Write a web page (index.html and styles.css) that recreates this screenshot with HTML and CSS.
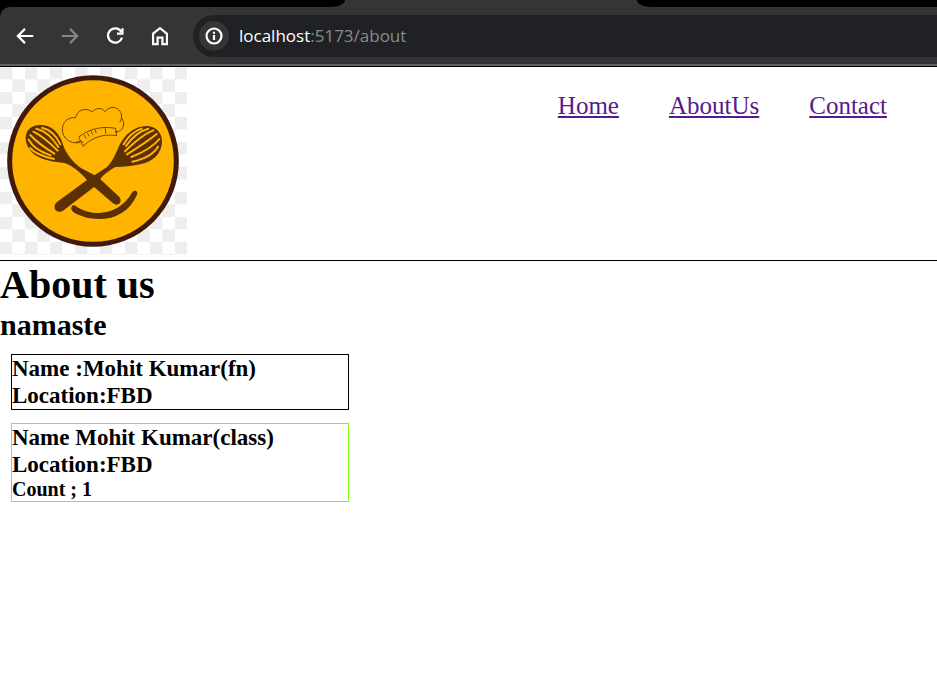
FILE: index.html
```html
<!DOCTYPE html>
<html lang="en">
<head>
<meta charset="utf-8">
<meta name="viewport" content="width=device-width, initial-scale=1">
<title>About us</title>
<link rel="stylesheet" href="styles.css">
</head>
<body>
<div class="browser">
  <div class="tabs">
    <div class="tab-before"></div>
    <div class="tab-active"></div>
    <div class="tab-after"></div>
  </div>
  <div class="toolbar">
    <div class="tools">
      <button class="tool" type="button" aria-label="Back">
        <svg viewBox="0 0 20 20"><path d="M17.5 10H4M10 3.5 3.5 10l6.500 6.500"/></svg>
      </button>
      <button class="tool tool-off" type="button" aria-label="Forward">
        <svg viewBox="0 0 20 20"><path d="M2.500 10H16M10 3.500 16.500 10 10 16.500"/></svg>
      </button>
      <button class="tool" type="button" aria-label="Reload">
        <svg viewBox="0 0 20 20"><path d="M15.800 6.200A6.500 6.500 0 1 0 16.400 11.500M16.800 3V7.800h-5"/></svg>
      </button>
      <button class="tool" type="button" aria-label="Home page">
        <svg viewBox="0 0 20 20"><path d="M3.700 7.900 10 2.900l6.300 5v9.500h-4.100v-6H7.800v6H3.700z"/></svg>
      </button>
    </div>
    <div class="address">
      <button class="site-info" type="button" aria-label="Site information">
        <svg viewBox="0 0 20 20"><circle cx="10" cy="10" r="6.800"/><path d="M10 9.200V13.600M10 6.200v1.800"/></svg>
      </button>
      <span class="url"><span class="host">localhost</span>:5173/about</span>
    </div>
  </div>
</div>

<header class="header">
  <svg class="logo" viewBox="0 3 561 564" role="img" aria-label="Whisks and chef hat logo">
    <defs>
      <pattern id="checks" y="3" width="75" height="75" patternUnits="userSpaceOnUse">
        <path fill="#fff" d="M0 0h75v75H0z"/>
        <path fill="#eee" d="M0 0h37v37H0zM37 37h38v38H37z"/>
      </pattern>
    </defs>
    <rect y="3" width="561" height="564" fill="url(#checks)"/>
    <circle cx="279" cy="285" r="250" fill="#ffb400" stroke="#421a0b" stroke-width="15"/>
    <g fill="none" stroke="#5b3005" stroke-width="2.500" stroke-linecap="round" stroke-linejoin="round">
      <path d="M238 230C210 235 188 216 187 192C187 168 203 153 227 155C230 132 258 122 277 138C288 124 306 124 315 137C328 119 352 120 362 139C367 149 365 160 360 168M366 157C378 176 368 195 350 198"/>
      <path d="M239 211C270 187 308 180 347 187L350 209C312 203 279 212 249 241L238 218C237 215 237 213 239 211zM243 224L249 230M253 208l5 9M263 202l4 8M274 196l4 9M286 192l2 8M316 188l1 14M227 229l13-3M351 197l-5 1"/>
    </g>
    <g fill="#5b3005">
      <path d="M120 177C164 177 183 211 193 247C204 270 225 295 244 307L294 333L355 390C372 404 355 425 339 412L269 352C248 325 224 302 194 291C145 286 103 277 86 246C66 209 82 178 120 177z"/>
      <path d="M440 180C402 180 373 207 357 240C346 268 335 290 320 304L258 344L171 408C154 423 169 446 189 434L289 358C302 333 317 319 346 303C396 301 444 297 469 270C501 233 486 181 440 180z"/>
      <path d="M215 422C219 413 228 419 234 425C291 456 362 442 397 379C403 369 416 375 411 386C386 444 331 467 270 457C242 450 206 438 215 422z"/>
    </g>
    <g fill="none" stroke="#ffb400" stroke-width="6" stroke-linecap="round">
      <path d="M126 185Q162 193 181 235M109 188Q146 196 175 243M100 197Q130 211 173 254M91 207Q112 231 163 263M86 221Q102 251 152 268M90 246Q110 268 162 279"/>
      <path d="M425 188Q391 199 371 235M445 188Q408 197 378 240M460 193Q427 205 375 256M470 204Q443 226 381 265M478 219Q456 248 394 273M474 242Q455 274 397 287"/>
    </g>
  </svg>
  <nav class="nav" aria-label="Main">
    <a href="#home">Home</a>
    <a href="#about">AboutUs</a>
    <a href="#contact">Contact</a>
  </nav>
</header>

<main>
  <h1>About us</h1>
  <h2>namaste</h2>
  <section class="user">
    <h3>Name :Mohit Kumar(fn)</h3>
    <h3>Location:FBD</h3>
  </section>
  <section class="user user-class">
    <h3>Name Mohit Kumar(class)</h3>
    <h3>Location:FBD</h3>
    <h4>Count ; 1</h4>
  </section>
</main>
</body>
</html>
```
FILE: styles.css
```css
* {
  box-sizing: border-box;
  margin: 0;
  padding: 0;
}

body {
  background: #fff;
  color: #000;
  font-family: "Liberation Serif", "Times New Roman", serif;
}

.browser {
  background: #000;
  border-bottom: 2px solid #606060;
}

.tabs {
  display: flex;
  height: 7px;
  background: #353535;
}

.tab-before,
.tab-after {
  background: #000;
}

.tab-before {
  width: 345px;
  border-bottom-right-radius: 14px 7px;
}

.tab-active {
  width: 292px;
}

.tab-after {
  flex: 1;
  border-bottom-left-radius: 14px 7px;
}

.toolbar {
  display: flex;
  align-items: center;
  padding: 8px 0 7px 14px;
  background: #353535;
  border-top-left-radius: 10px;
}

.tools {
  display: flex;
  gap: 23px;
  margin-right: 22px;
}

button {
  border: 0;
  background: none;
  color: #fff;
}

button svg {
  display: block;
  width: 22px;
  height: 22px;
  fill: none;
  stroke: currentColor;
  stroke-width: 2;
}

.tool-off {
  color: #868686;
}

.address {
  flex: 1;
  display: flex;
  align-items: center;
  gap: 10px;
  height: 42px;
  padding-left: 6px;
  background: #202124;
  border-radius: 21px 0 0 21px;
}

.site-info {
  padding: 4px;
  border-radius: 50%;
  background: #353535;
}

.url {
  color: #8b8c8e;
  font-family: "Open Sans", "Noto Sans", sans-serif;
  font-size: 17px;
  line-height: 24px;
}

.host {
  color: #fff;
}

.header {
  display: flex;
  justify-content: space-between;
  align-items: flex-start;
  padding-bottom: 5px;
  border-top: 1px solid #000;
  border-bottom: 1px solid #000;
}

.logo {
  display: block;
  width: 187px;
  height: 188px;
}

.nav {
  display: flex;
  gap: 50px;
  padding: 25px 50px;
  font-size: 25px;
  line-height: 28px;
}

.nav a {
  color: #551a8b;
}

h1 {
  font-size: 40px;
  line-height: 48px;
}

h2 {
  font-size: 30px;
  line-height: 32px;
}

h3 {
  font-size: 23px;
  line-height: 27px;
}

h4 {
  font-size: 20px;
  line-height: 23px;
}

.user {
  width: 36.1%;
  margin: 13px 11px;
  border: 1px solid #000;
}

.user-class {
  border-color: #7cfc00;
}
```
